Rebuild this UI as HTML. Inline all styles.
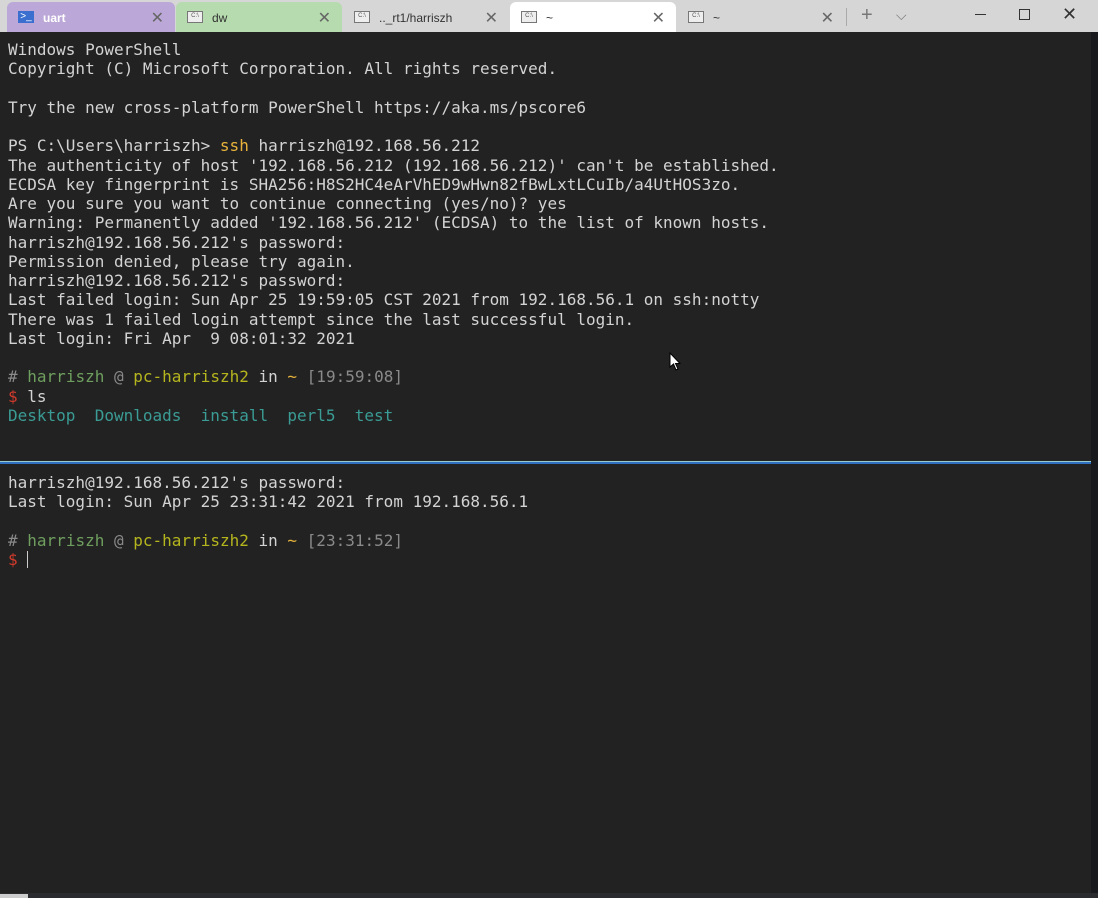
<!DOCTYPE html>
<html><head><meta charset="utf-8"><style>
*{margin:0;padding:0;box-sizing:border-box}
body{width:1098px;height:898px;background:#222223;overflow:hidden;position:relative;font-family:"DejaVu Sans Mono","Liberation Mono",monospace}
#bar{position:absolute;left:0;top:0;width:1098px;height:32px;background:#d6d6d6}
.tab{position:absolute;top:2px;height:30px;font:12px "Liberation Sans",sans-serif;color:#333;border-radius:6px 6px 0 0}
.tab span.t{position:absolute;left:36px;top:9px}
.tab .x{position:absolute;right:11px;top:6px;font-size:16px;color:#666}
.ic{position:absolute;left:11px;top:9px;width:16px;height:12px;border:1px solid #777;background:#eee;font-size:6px;line-height:9px;text-align:center;color:#555}
.term{position:absolute;left:8px;font-size:16px;line-height:19.25px;color:#d3d3d3;white-space:pre}
.g{color:#6f9f5e}.y{color:#b5b51e}.o{color:#e8b33a}.r{color:#d23b2b}.c{color:#3a9c94}.gr{color:#8a8a8a}
</style></head><body>
<div id="bar">
 <div class="tab" style="left:7px;width:168px;background:#bba8d8"><div style="position:absolute;left:11px;top:9px;width:16px;height:12px;background:#3b6fcf;color:#fff;font-size:10px;line-height:12px;text-align:center">&gt;_</div><span class="t" style="color:#fff;font-weight:bold">uart</span><span class="x">✕</span></div>
 <div class="tab" style="left:176px;width:166px;background:#b6dbae"><div class="ic">C:\</div><span class="t">dw</span><span class="x">✕</span></div>
 <div class="tab" style="left:343px;width:166px;background:#d6d6d6"><div class="ic">C:\</div><span class="t">.._rt1/harriszh</span><span class="x">✕</span></div>
 <div class="tab" style="left:510px;width:166px;background:#fff"><div class="ic">C:\</div><span class="t">~</span><span class="x">✕</span></div>
 <div class="tab" style="left:677px;width:168px;background:#d6d6d6"><div class="ic">C:\</div><span class="t">~</span><span class="x">✕</span></div>
 <div style="position:absolute;left:846px;top:8px;width:1px;height:18px;background:#aaa"></div>
 <div style="position:absolute;left:861px;top:4px;font:20px 'Liberation Sans';color:#777">+</div>
 <div style="position:absolute;left:896px;top:7px;font:14px 'Liberation Sans';color:#777">⌵</div>
 <div style="position:absolute;left:975px;top:14px;width:11px;height:1px;background:#333"></div>
 <div style="position:absolute;left:1019px;top:9px;width:11px;height:11px;border:1px solid #333"></div>
 <div style="position:absolute;left:1062px;top:4px;font:18px 'Liberation Sans';color:#333">✕</div>
</div>
<div style="position:absolute;left:1091px;top:32px;width:7px;height:866px;background:#18191c"></div>
<div class="term" style="top:40px">Windows PowerShell
Copyright (C) Microsoft Corporation. All rights reserved.

Try the new cross-platform PowerShell https://aka.ms/pscore6

PS C:\Users\harriszh&gt; <span class="o">ssh</span> harriszh@192.168.56.212
The authenticity of host '192.168.56.212 (192.168.56.212)' can't be established.
ECDSA key fingerprint is SHA256:H8S2HC4eArVhED9wHwn82fBwLxtLCuIb/a4UtHOS3zo.
Are you sure you want to continue connecting (yes/no)? yes
Warning: Permanently added '192.168.56.212' (ECDSA) to the list of known hosts.
harriszh@192.168.56.212's password:
Permission denied, please try again.
harriszh@192.168.56.212's password:
Last failed login: Sun Apr 25 19:59:05 CST 2021 from 192.168.56.1 on ssh:notty
There was 1 failed login attempt since the last successful login.
Last login: Fri Apr  9 08:01:32 2021

<span class="gr">#</span> <span class="g">harriszh</span> <span class="gr">@</span> <span class="y">pc-harriszh2</span> in <span class="o">~</span> <span class="gr">[19:59:08]</span>
<span class="r">$</span> ls
<span class="c">Desktop  Downloads  install  perl5  test</span></div>
<div style="position:absolute;left:0;top:461px;width:1091px;height:3px;background:#2f6fbf;border-top:1px solid #9cc"></div>
<div class="term" style="top:473px">harriszh@192.168.56.212's password:
Last login: Sun Apr 25 23:31:42 2021 from 192.168.56.1

<span class="gr">#</span> <span class="g">harriszh</span> <span class="gr">@</span> <span class="y">pc-harriszh2</span> in <span class="o">~</span> <span class="gr">[23:31:52]</span>
<span class="r">$</span> <span style="display:inline-block;width:1px;height:17px;background:#ccc;vertical-align:-3px"></span></div>
<svg style="position:absolute;left:669px;top:352px" width="12" height="20"><path d="M1 1 L1 15 L4.5 12 L7 18 L9 17 L6.5 11.5 L11 11.5 Z" fill="#fff" stroke="#000" stroke-width="1"/></svg>
<div style="position:absolute;left:0;top:893px;width:1098px;height:5px;background:#2a2b2e"></div>
<div style="position:absolute;left:0;top:894px;width:28px;height:4px;background:#ccc"></div>
</body></html>
